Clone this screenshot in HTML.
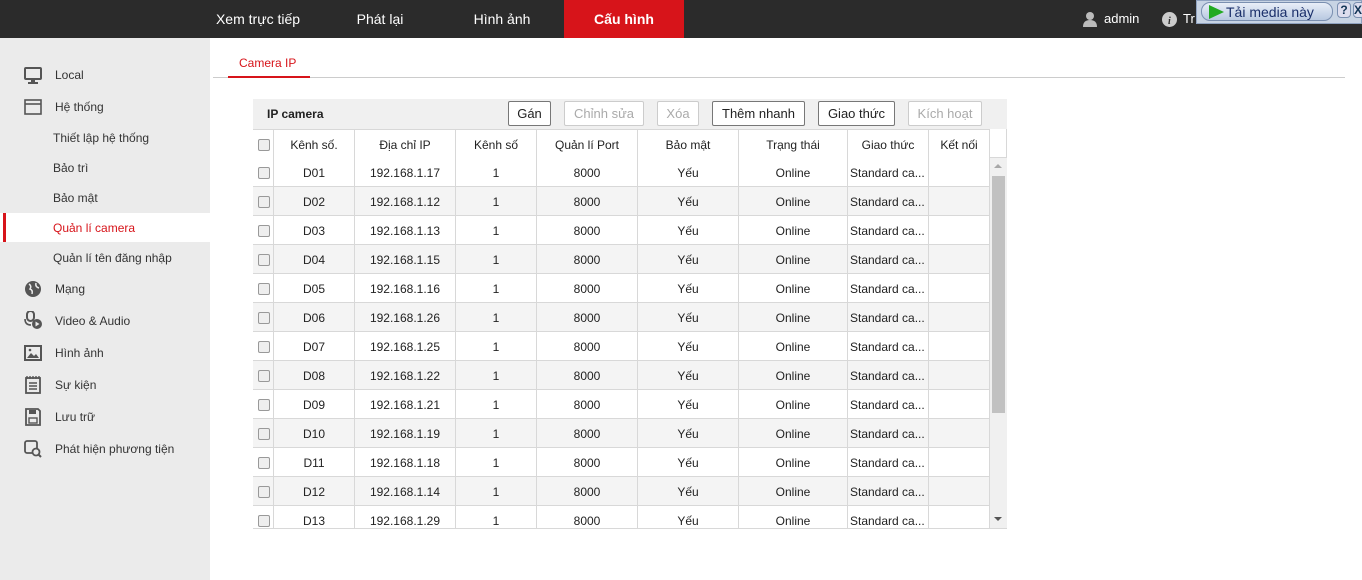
<!DOCTYPE html>
<html><head><meta charset="utf-8"><style>
*{margin:0;padding:0;box-sizing:border-box}
body{width:1362px;height:580px;overflow:hidden;background:#fff;font-family:"Liberation Sans",Arial,sans-serif;font-size:12px;color:#333;position:relative}
.top{position:absolute;left:0;top:0;width:1362px;height:38px;background:#2b2b2b}
.nav{position:absolute;top:0;height:38px;line-height:38px;color:#fff;font-size:14px;text-align:center}
.side{position:absolute;left:0;top:38px;width:210px;height:542px;background:#ebebeb}
.si{position:absolute;left:55px;font-size:12px;color:#333}
.ic{position:absolute;left:24px;width:18px;height:18px}
.sub{position:absolute;left:53px;font-size:12px;color:#333}
.tb{position:absolute;left:253px;top:99px;width:754px;height:30px;background:#f0f0f0}
.btn{position:absolute;top:101px;height:25px;border:1px solid #777;background:#fff;font-size:13px;line-height:23px;text-align:center;color:#222;border-radius:2px}
.btn.d{border-color:#ccc;color:#aaa}
.row{position:absolute;left:253px;width:737px;height:29px;border-bottom:1px solid #d8d8d8}
.c{position:absolute;top:0;height:29px;line-height:31px;text-align:center;border-right:1px solid #d8d8d8;font-size:12px;color:#222;white-space:nowrap;overflow:hidden}
.cb{position:absolute;left:5px;top:9px;width:12px;height:12px;border:1px solid #999;border-radius:2px;background:#eee}
</style></head><body>
<div class="top"></div>
<div class="nav" style="left:200px;width:116px">Xem trực tiếp</div>
<div class="nav" style="left:330px;width:100px">Phát lại</div>
<div class="nav" style="left:452px;width:100px">Hình ảnh</div>
<div class="nav" style="left:564px;width:120px;background:#d7141a;font-weight:bold">Cấu hình</div>
<svg style="position:absolute;left:1082px;top:11px" width="16" height="16"><circle cx="8" cy="5" r="4" fill="#bbb"/><path d="M1 16 Q1 9 8 9 Q15 9 15 16Z" fill="#bbb"/></svg>
<div style="position:absolute;left:1104px;top:11px;color:#fff;font-size:13px">admin</div>
<svg style="position:absolute;left:1162px;top:12px" width="15" height="15"><circle cx="7.5" cy="7.5" r="7.5" fill="#ccc"/><text x="6" y="12" font-size="10" font-style="italic" font-weight="bold" fill="#2b2b2b" font-family="Liberation Serif">i</text></svg>
<div style="position:absolute;left:1183px;top:11px;color:#fff;font-size:13px">Tr</div>
<div style="position:absolute;left:1196px;top:0;width:166px;height:24px;background:#c8d4e4;border:1px solid #8fa2c0"></div>
<div style="position:absolute;left:1201px;top:2px;width:132px;height:19px;border:1px solid #7a8fb0;border-radius:9px;background:linear-gradient(#e8eef8,#b8c8e0);font-size:14px;color:#1a2f6a;line-height:18px;padding-left:24px">Tải media này</div>
<svg style="position:absolute;left:1207px;top:4px" width="18" height="16"><path d="M2 1 L17 8 L2 15Z" fill="#2a2"/></svg>
<div style="position:absolute;left:1337px;top:2px;width:14px;height:16px;border:1px solid #7a8fb0;border-radius:4px;background:#dde;font-size:12px;font-weight:bold;text-align:center;line-height:15px;color:#135">?</div>
<div style="position:absolute;left:1353px;top:2px;width:12px;height:16px;border:1px solid #7a8fb0;border-radius:4px;background:#dde;font-size:12px;font-weight:bold;line-height:15px;color:#135">X</div>

<div class="side"></div>
<svg class="ic" style="top:66px" viewBox="0 0 18 18"><rect x="1" y="2" width="16" height="11" rx="1" fill="none" stroke="#555" stroke-width="2"/><rect x="7" y="13" width="4" height="3" fill="#555"/><rect x="4" y="16" width="10" height="2" fill="#555"/></svg>
<div class="si" style="top:68px">Local</div>
<svg class="ic" style="top:98px" viewBox="0 0 18 18"><rect x="1" y="2" width="16" height="14" fill="none" stroke="#555" stroke-width="1.6"/><line x1="1" y1="6" x2="17" y2="6" stroke="#555" stroke-width="1.6"/></svg>
<div class="si" style="top:100px">Hệ thống</div>
<div class="sub" style="top:131px">Thiết lập hệ thống</div>
<div class="sub" style="top:161px">Bảo trì</div>
<div class="sub" style="top:191px">Bảo mật</div>
<div style="position:absolute;left:0;top:213px;width:210px;height:29px;background:#fff"></div>
<div style="position:absolute;left:3px;top:213px;width:3px;height:29px;background:#d7141a"></div>
<div class="sub" style="top:221px;color:#d7141a">Quản lí camera</div>
<div class="sub" style="top:251px">Quản lí tên đăng nhập</div>
<svg class="ic" style="top:280px" viewBox="0 0 18 18"><circle cx="9" cy="9" r="8" fill="#555"/><path d="M5 4 Q8 6 6 9 Q9 10 8 14 M12 3 Q11 7 15 8" stroke="#ebebeb" stroke-width="1.5" fill="none"/></svg>
<div class="si" style="top:282px">Mạng</div>
<svg class="ic" style="top:311px" viewBox="0 0 18 18"><rect x="3" y="0" width="7" height="10" rx="3.5" fill="none" stroke="#555" stroke-width="2"/><path d="M1 8 Q1 14 7 14" stroke="#555" stroke-width="1.6" fill="none"/><circle cx="13" cy="13" r="5" fill="#555"/><path d="M11.5 10.5 L15.5 13 L11.5 15.5Z" fill="#ebebeb"/></svg>
<div class="si" style="top:314px">Video &amp; Audio</div>
<svg class="ic" style="top:344px" viewBox="0 0 18 18"><rect x="1" y="2" width="16" height="14" fill="none" stroke="#555" stroke-width="2"/><path d="M3 14 L7 9 L10 12 L12 10 L15 14Z" fill="#555"/><circle cx="6" cy="6" r="1.3" fill="#555"/></svg>
<div class="si" style="top:346px">Hình ảnh</div>
<svg class="ic" style="top:376px" viewBox="0 0 18 18"><rect x="2" y="2" width="14" height="15" fill="none" stroke="#555" stroke-width="1.8"/><path d="M3 0v3M6 0v3M9 0v3M12 0v3M15 0v3M5 7h8M5 10h8M5 13h8" stroke="#555" stroke-width="1.4"/></svg>
<div class="si" style="top:378px">Sự kiện</div>
<svg class="ic" style="top:408px" viewBox="0 0 18 18"><path d="M2 1 H14 L16 3 V17 H2Z" fill="none" stroke="#555" stroke-width="1.8"/><rect x="5" y="2" width="7" height="4" fill="#555"/><rect x="5" y="10" width="8" height="5" fill="none" stroke="#555" stroke-width="1.4"/></svg>
<div class="si" style="top:410px">Lưu trữ</div>
<svg class="ic" style="top:440px" viewBox="0 0 18 18"><rect x="1" y="1" width="12" height="12" rx="2" fill="none" stroke="#555" stroke-width="1.8"/><circle cx="12" cy="12" r="3.5" fill="#ebebeb" stroke="#555" stroke-width="1.8"/><line x1="14.5" y1="14.5" x2="17" y2="17" stroke="#555" stroke-width="2"/></svg>
<div class="si" style="top:442px">Phát hiện phương tiện</div>

<div style="position:absolute;left:213px;top:77px;width:1132px;height:1px;background:#ccc"></div>
<div style="position:absolute;left:228px;top:76px;width:82px;height:2px;background:#d7141a"></div>
<div style="position:absolute;left:239px;top:56px;color:#d7141a;font-size:12px">Camera IP</div>

<div class="tb"></div>
<div style="position:absolute;left:267px;top:107px;font-size:12px;font-weight:bold;color:#222">IP camera</div>
<div class="btn" style="left:508px;width:43px">Gán</div>
<div class="btn d" style="left:564px;width:80px">Chỉnh sửa</div>
<div class="btn d" style="left:657px;width:42px">Xóa</div>
<div class="btn" style="left:712px;width:93px">Thêm nhanh</div>
<div class="btn" style="left:818px;width:77px">Giao thức</div>
<div class="btn d" style="left:908px;width:74px">Kích hoạt</div>

<div style="position:absolute;left:253px;top:129px;width:754px;height:400px;border:1px solid #d8d8d8;border-top:none;overflow:hidden"></div>
<div style="position:absolute;left:990px;top:129px;width:17px;height:29px;border-bottom:1px solid #d8d8d8;border-right:1px solid #d8d8d8"></div>
<div style="position:absolute;left:990px;top:158px;width:17px;height:370px;background:#f0f0f0"></div>
<div style="position:absolute;left:992px;top:176px;width:13px;height:237px;background:#c1c1c1"></div>
<div style="position:absolute;left:994px;top:164px;width:0;height:0;border:4px solid transparent;border-bottom-color:#a8a8a8;border-top:none"></div>
<div style="position:absolute;left:994px;top:517px;width:0;height:0;border:4px solid transparent;border-top-color:#555;border-bottom:none"></div>
<div id="rows" style="position:absolute;left:0;top:0;width:1362px;height:528px;overflow:hidden">
<div class="row" style="top:129px;background:#fff;border-top:1px solid #d8d8d8;height:30px">
<div class="c" style="left:0;width:21px"><div class="cb"></div></div>
<div class="c" style="left:21px;width:81px">Kênh số.</div>
<div class="c" style="left:102px;width:101px">Địa chỉ IP</div>
<div class="c" style="left:203px;width:81px">Kênh số</div>
<div class="c" style="left:284px;width:101px">Quản lí Port</div>
<div class="c" style="left:385px;width:101px">Bảo mật</div>
<div class="c" style="left:486px;width:109px">Trạng thái</div>
<div class="c" style="left:595px;width:81px">Giao thức</div>
<div class="c" style="left:676px;width:61px">Kết nối</div>
</div>
</div>
<script>
var ips=["17","12","13","15","16","26","25","22","21","19","18","14","29"];
var h="";
for(var i=0;i<13;i++){var t=158+i*29;var bg=i%2?"#f4f4f4":"#fff";var n=("0"+(i+1)).slice(-2);
h+='<div class="row" style="top:'+t+'px;background:'+bg+'"><div class="c" style="left:0;width:21px"><div class="cb"></div></div><div class="c" style="left:21px;width:81px">D'+n+'</div><div class="c" style="left:102px;width:101px">192.168.1.'+ips[i]+'</div><div class="c" style="left:203px;width:81px">1</div><div class="c" style="left:284px;width:101px">8000</div><div class="c" style="left:385px;width:101px">Yếu</div><div class="c" style="left:486px;width:109px">Online</div><div class="c" style="left:595px;width:81px;text-align:left;padding-left:2px">Standard ca...</div><div class="c" style="left:676px;width:61px"></div></div>';}
document.getElementById("rows").insertAdjacentHTML("beforeend",h);
</script>
</body></html>
